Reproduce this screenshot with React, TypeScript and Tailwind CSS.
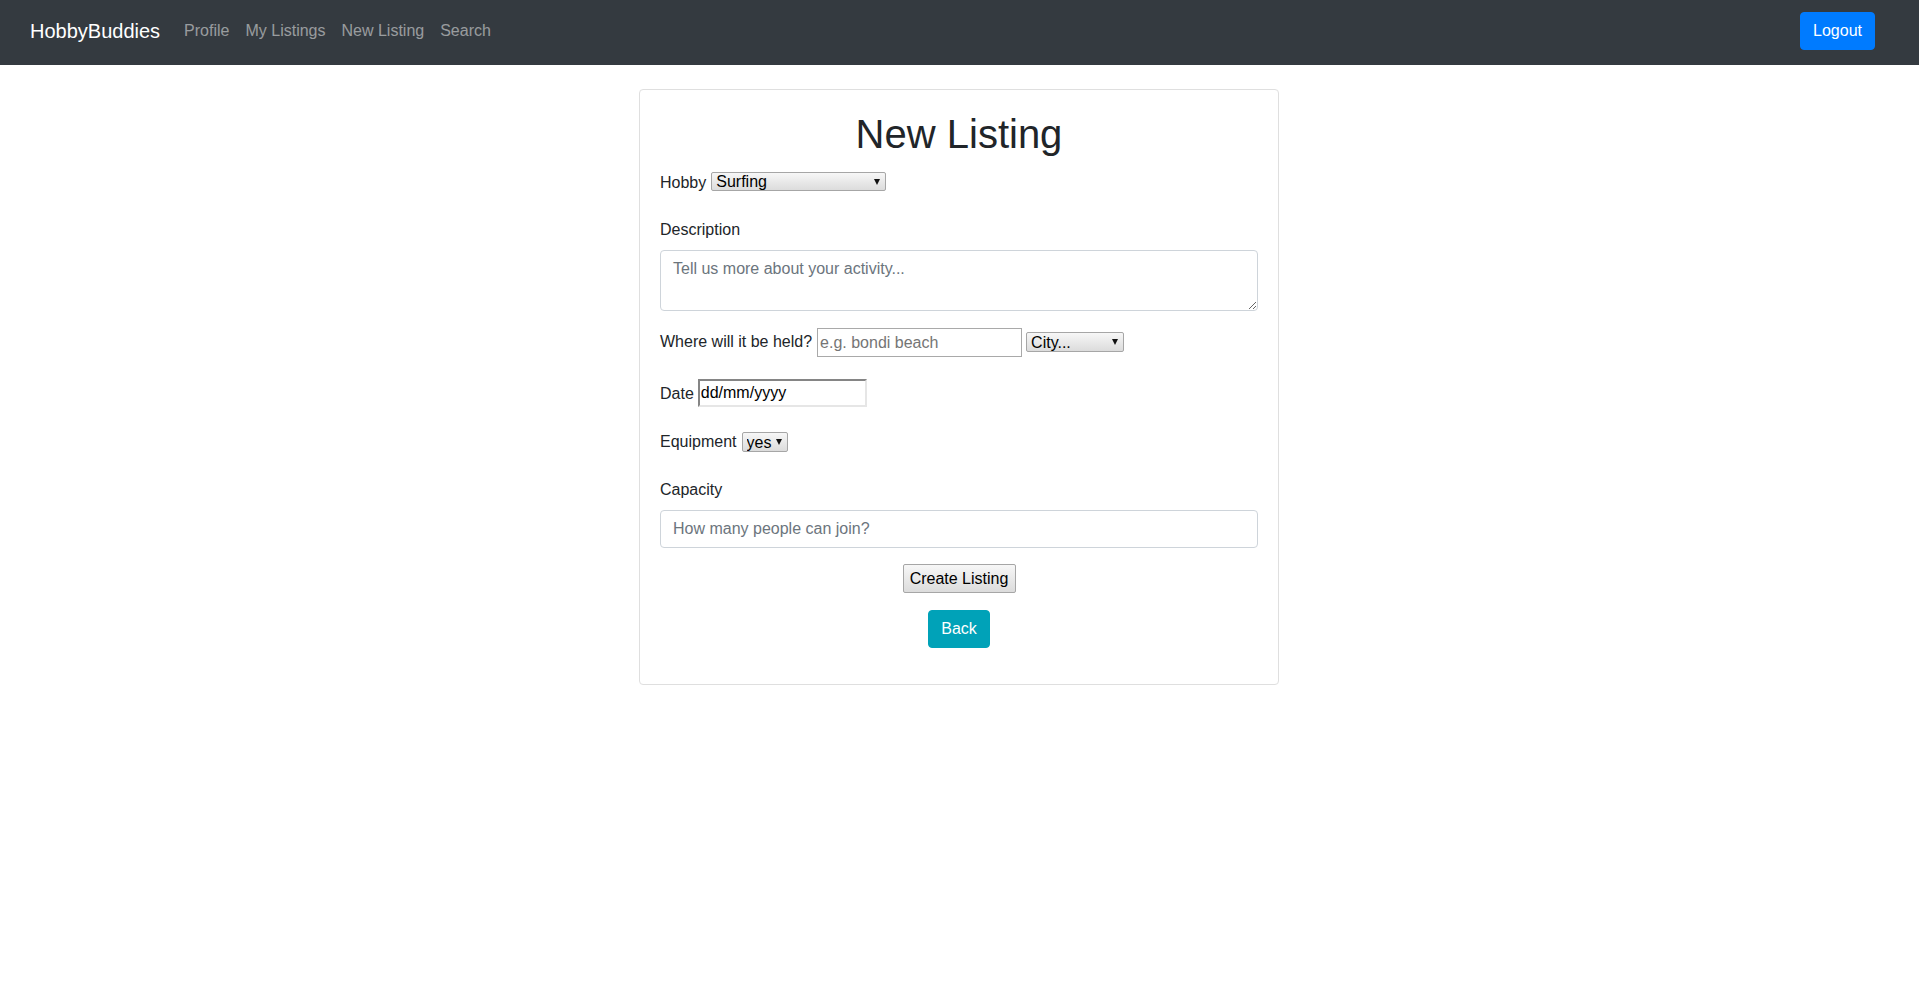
import React from "react";

function Arrow() {
  return (
    <svg
      width="6"
      height="6"
      viewBox="0 0 6 6"
      className="absolute right-[6px] top-1/2 -translate-y-1/2 pointer-events-none"
    >
      <path d="M0 0H6L3 6Z" fill="#111" />
    </svg>
  );
}

function GtkSelect({
  className,
  options,
}: {
  className: string;
  options: string[];
}) {
  return (
    <div className={"relative shrink-0 " + className}>
      <select className="appearance-none block w-full h-full pl-[4px] pr-[14px] border border-[#a6a6a6] rounded-[2px] bg-linear-to-b from-[#f7f7f7] to-[#dcdcdc] text-[16px] leading-[17px] text-black outline-none">
        {options.map((o) => (
          <option key={o}>{o}</option>
        ))}
      </select>
      <Arrow />
    </div>
  );
}

export default function App() {
  return (
    <div className="min-h-screen bg-white font-['Liberation_Sans',Arial,sans-serif]">
      <nav className="h-[65px] bg-[#343a40] flex items-center pl-[30px] pr-[44px] pb-[3px]">
        <span className="text-white text-[20px] leading-[30px] mr-[16px]">HobbyBuddies</span>
        <a className="text-white/50 text-[16px] leading-[24px] px-[8px]">Profile</a>
        <a className="text-white/50 text-[16px] leading-[24px] px-[8px]">My Listings</a>
        <a className="text-white/50 text-[16px] leading-[24px] px-[8px]">New Listing</a>
        <a className="text-white/50 text-[16px] leading-[24px] px-[8px]">Search</a>
        <button className="ml-auto h-[38px] px-[12px] bg-[#007bff] border border-[#007bff] rounded-[4px] text-white text-[16px] leading-[24px]">
          Logout
        </button>
      </nav>

      <div className="w-[640px] ml-[639px] mt-[24px] border border-[#dfdfdf] rounded-[4px] px-[20px] pt-[20px] pb-[36px] text-[#212529] text-[16px] leading-[24px]">
        <h1 className="text-[40px] leading-[48px] text-center font-normal">New Listing</h1>

        <div className="flex items-start mt-[13px] h-[24px]">
          <span>Hobby</span>
          <GtkSelect className="ml-[5px] mt-[1px] w-[175px] h-[19px]" options={["Surfing", "Hiking", "Cycling"]} />
        </div>

        <div className="mt-[23px]">Description</div>
        <textarea
          className="block mt-[8px] w-full h-[61px] border border-[#ced4da] rounded-[4px] px-[12px] py-[6px] text-[16px] leading-[24px] placeholder:text-[#6c757d] outline-none"
          placeholder="Tell us more about your activity..."
        />

        <div className="flex items-start mt-[17px]">
          <span className="mt-[2px]">Where will it be held?</span>
          <input
            className="ml-[5px] w-[205px] h-[29px] border border-[#a9a9a9] px-[2px] text-[16px] placeholder:text-[#757575] outline-none"
            placeholder="e.g. bondi beach"
          />
          <GtkSelect className="ml-[4px] mt-[4px] w-[98px] h-[20px]" options={["City...", "Sydney", "Melbourne"]} />
        </div>

        <div className="flex items-start mt-[22px]">
          <span className="mt-[3px]">Date</span>
          <input
            className="ml-[4px] w-[169px] h-[28px] border-2 border-t-[#858585] border-l-[#858585] border-b-[#e6e6e6] border-r-[#e6e6e6] pl-[1px] text-[16px] text-black outline-none"
            defaultValue="dd/mm/yyyy"
          />
        </div>

        <div className="flex items-start mt-[23px] h-[24px]">
          <span>Equipment</span>
          <GtkSelect className="ml-[5px] mt-[2px] w-[46px] h-[20px]" options={["yes", "no"]} />
        </div>

        <div className="mt-[24px]">Capacity</div>
        <input
          className="block mt-[8px] w-full h-[38px] border border-[#ced4da] rounded-[4px] px-[12px] py-[6px] text-[16px] leading-[24px] placeholder:text-[#6c757d] outline-none"
          placeholder="How many people can join?"
        />

        <div className="flex justify-center mt-[16px]">
          <button className="w-[113px] h-[29px] border border-[#a6a6a6] rounded-[2px] bg-linear-to-b from-[#f7f7f7] to-[#dcdcdc] text-black text-[16px] leading-[18px]">
            Create Listing
          </button>
        </div>

        <div className="flex justify-center mt-[17px]">
          <button className="h-[38px] px-[12px] bg-[#00a2b8] border border-[#00a2b8] rounded-[4px] text-white text-[16px] leading-[24px]">
            Back
          </button>
        </div>
      </div>
    </div>
  );
}
